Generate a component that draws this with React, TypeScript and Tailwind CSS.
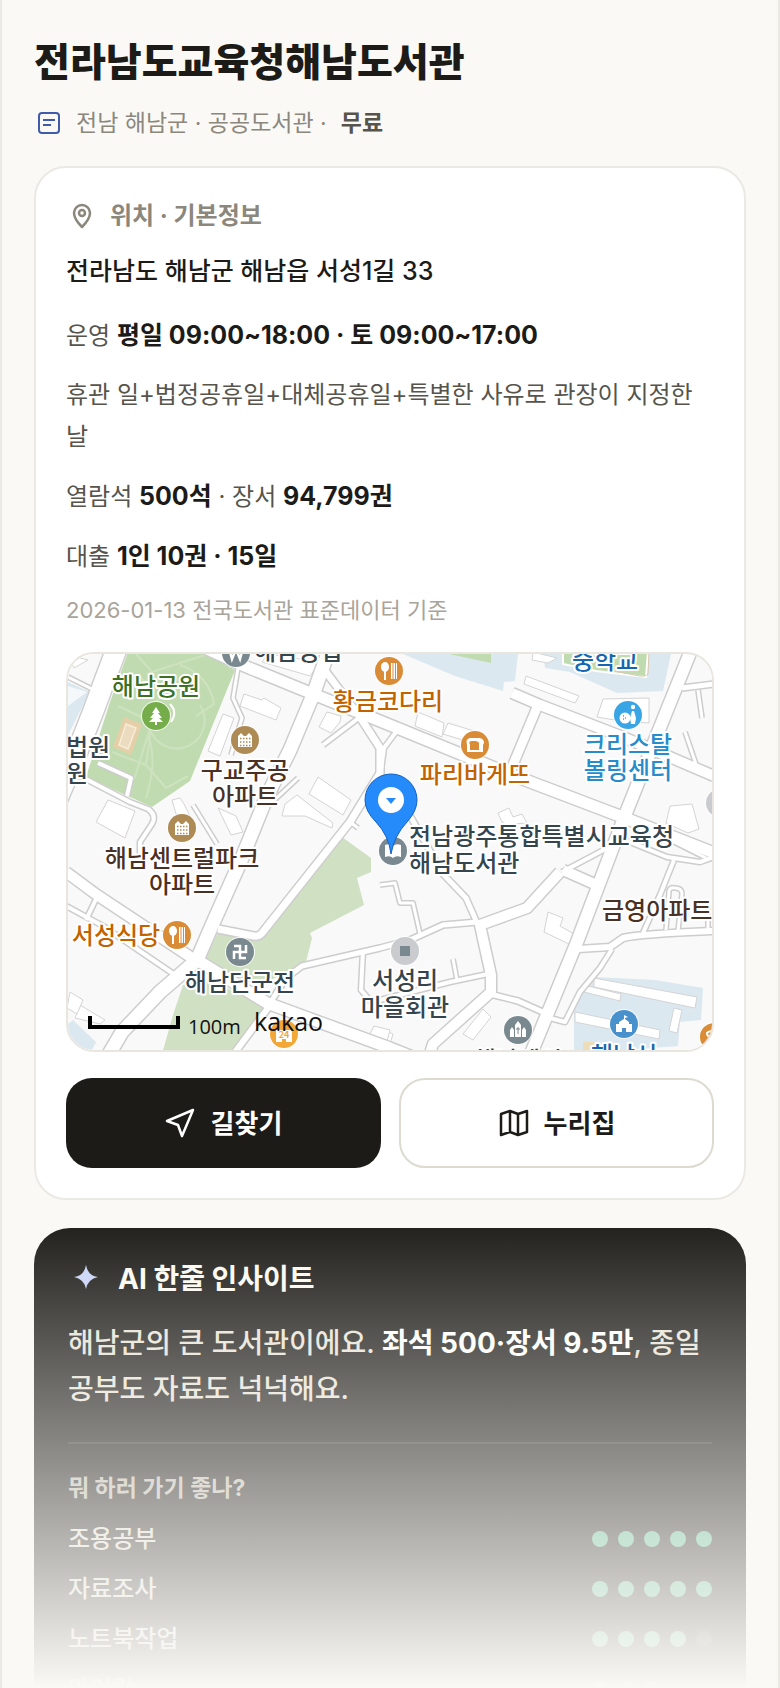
import type { ReactNode } from "react";

type Road = { d: string; w: number };

type MapLabel = {
  x: number;
  y: number;
  text: string;
  color: string;
  anchor?: "start" | "middle";
};

type Activity = { name: string; score: number };

const SLATE = "#35454d";
const BROWN = "#4b3124";
const ORANGE = "#c26300";

const ROADS: Road[] = [
  { d: "M68 677L92 689", w: 5 },
  { d: "M98 763L131 778L127 796", w: 6 },
  { d: "M80 776L130 802L148 809Q157 815 152 824L140 842V860", w: 6 },
  { d: "M238 668L233 698L242 718L231 755", w: 5 },
  { d: "M360 717L323 745", w: 6 },
  { d: "M193 805L217 844", w: 5 },
  { d: "M298 778L268 806", w: 5 },
  { d: "M323 668L360 717L380 748V773L350 822L262 933Q259 937 254 936L218 929", w: 9 },
  { d: "M350 822L358 828", w: 5 },
  { d: "M396 732L384 748L381 770", w: 6 },
  { d: "M682 688L714 684", w: 7 },
  { d: "M698 690L702 718", w: 5 },
  { d: "M685 732L697 767", w: 5 },
  { d: "M625 840L667 857L700 862L714 857", w: 6 },
  { d: "M640 825L706 858", w: 5 },
  { d: "M674 860L660 895L643 933", w: 6 },
  { d: "M666 930L669 891Q670 887 675 888Q682 888 682 894L678 931", w: 5 },
  { d: "M708 908V930", w: 5 },
  { d: "M578 949L610 947L623 938Q640 934 714 931", w: 8 },
  { d: "M612 949L600 968L580 992L565 1022L550 1018", w: 6 },
  { d: "M613 845L562 872", w: 6 },
  { d: "M563 870L599 886", w: 12 },
  { d: "M560 872L527 908L480 925L491 975V992L433 1044L428 1060", w: 12 },
  { d: "M490 994L518 1001L545 1013", w: 7 },
  { d: "M408 812L443 874L466 898L478 925", w: 7 },
  { d: "M478 922L443 925L410 940L380 948L302 966L286 978L272 1000", w: 7 },
  { d: "M380 885L395 883L400 903H413L420 934", w: 5 },
  { d: "M453 959L457 980", w: 5 },
  { d: "M380 1000L450 982L488 974", w: 6 },
  { d: "M363 950L361 990L378 1010", w: 6 },
  { d: "M66 872L97 895L192 958", w: 12 },
  { d: "M66 906L103 926L175 975", w: 6 },
  { d: "M97 897L86 920", w: 6 },
  { d: "M268 1008L233 1055", w: 8 },
  { d: "M197 960L267 1003L390 1048L420 1060", w: 13 },
  { d: "M512 693L540 705L623 737L714 776", w: 12 },
  { d: "M538 705L510 772", w: 11 },
  { d: "M329 650L313 695L290 750L267 796L242 858L213 923L197 960L160 992L122 1032L108 1056", w: 15 },
  { d: "M205 648L242 665L313 694L380 721L512 775L625 818L714 853", w: 13 },
  { d: "M692 648L657 735L624 818L577 942L547 1015L530 1056", w: 14 },
];

const BUILDINGS = [
  "68,655 88,660 74,668",
  "244,694 262,700 264,698 281,708 276,720 240,706",
  "223,714 234,718 220,756 208,751",
  "327,712 341,716 340,722 331,733 319,727",
  "268,654 320,662 310,676 262,662",
  "108,800 135,811 125,838 96,822",
  "172,800 180,798 184,804 190,816 176,814",
  "218,808 236,816 243,832 231,835",
  "318,777 351,800 343,815 309,794",
  "285,804 297,795 333,823 332,828 305,816 282,816",
  "526,676 579,696 575,703 524,684",
  "603,699 649,698 649,723 621,721 597,717",
  "418,712 444,723 442,737 415,726",
  "448,723 474,731 466,741 443,734",
  "533,652 557,658 548,663 532,660",
  "498,813 509,808 513,817 522,814 527,823 512,824 510,826 502,822",
  "670,806 692,804 699,829 688,833 666,823",
  "548,912 563,918 560,926 574,934 569,944 544,932",
  "594,978 697,997 695,1008 594,987",
  "584,985 621,994 620,1001 584,992",
  "575,1012 660,1030 659,1039 575,1022",
  "674,1008 682,1010 677,1033 669,1031",
  "483,1009 491,1017 473,1040 463,1034 471,1024",
  "380,1028 393,1034 390,1044 374,1038",
  "80,1005 105,1020 100,1024 75,1018",
  "70,992 83,1000 77,1014 67,1008",
  "374,1026 390,1030 386,1045 368,1038",
];

const LABELS: MapLabel[] = [
  { x: 156, y: 695, text: "해남공원", color: "#3c7024" },
  { x: 66, y: 756, text: "법원", color: SLATE, anchor: "start" },
  { x: 66, y: 782, text: "원", color: SLATE, anchor: "start" },
  { x: 254, y: 660, text: "해남농협", color: SLATE, anchor: "start" },
  { x: 245, y: 779, text: "구교주공", color: BROWN },
  { x: 245, y: 805, text: "아파트", color: BROWN },
  { x: 182, y: 867, text: "해남센트럴파크", color: BROWN },
  { x: 182, y: 893, text: "아파트", color: BROWN },
  { x: 388, y: 710, text: "황금코다리", color: ORANGE },
  { x: 605, y: 669, text: "중학교", color: "#1767b0" },
  { x: 628, y: 753, text: "크리스탈", color: "#268ccb" },
  { x: 628, y: 779, text: "볼링센터", color: "#268ccb" },
  { x: 475, y: 783, text: "파리바게뜨", color: ORANGE },
  { x: 409, y: 845, text: "전남광주통합특별시교육청", color: SLATE, anchor: "start" },
  { x: 409, y: 872, text: "해남도서관", color: SLATE, anchor: "start" },
  { x: 602, y: 919, text: "금영아파트", color: BROWN, anchor: "start" },
  { x: 116, y: 944, text: "서성식당", color: ORANGE },
  { x: 240, y: 991, text: "해남단군전", color: SLATE },
  { x: 405, y: 989, text: "서성리", color: SLATE },
  { x: 405, y: 1016, text: "마을회관", color: SLATE },
  { x: 624, y: 1064, text: "해남서", color: "#1767b0" },
  { x: 518, y: 1069, text: "해남제일", color: SLATE },
];

const ACTIVITIES: Activity[] = [
  { name: "조용공부", score: 5 },
  { name: "자료조사", score: 5 },
  { name: "노트북작업", score: 4 },
  { name: "아이랑", score: 3 },
];

function Poi({ x, y, fill, children }: { x: number; y: number; fill: string; children?: ReactNode }) {
  return (
    <g transform={`translate(${x} ${y})`}>
      <circle r="15" fill="#fff" opacity="0.85" />
      <circle r="14" fill={fill} />
      {children}
    </g>
  );
}

function FoodGlyph() {
  return (
    <g fill="#fff">
      <ellipse cx="-4" cy="-4" rx="4" ry="5" />
      <path d="M-5 0h2v9h-2zM2 -8h1.500V8H2zM4.500 -8H6V8H4.500zM7 -8h1V8H7z" />
    </g>
  );
}

function ApartmentGlyph() {
  return (
    <g>
      <path d="M-7 7V-4l3-3 3 3h2l3-3 3 3V7z" fill="#fff" />
      <path d="M-5 -1.500H5.500M-5 2H5.500M-5 5.500H5.500" stroke="#ae8a55" strokeWidth="1.500" strokeDasharray="1.500 1.500" />
    </g>
  );
}

function LocationMap() {
  return (
    <svg
      viewBox="68 654 644 396"
      preserveAspectRatio="xMidYMid slice"
      className="block h-full w-full font-['Noto_Sans_CJK_KR',sans-serif]"
      role="img"
      aria-label="도서관 위치 지도"
    >
      <rect x="60" y="640" width="670" height="420" fill="#f9f9f9" />

      {/* school grounds and water-blue lots */}
      <g fill="#dce8f0">
        <path d="M68 682L90 692L68 735z" />
        <path d="M403 654H518L515 681L504 682L503 691L455 676z" />
        <path d="M543 654H671L663 691L617 693L570 672L545 668z" />
        <path d="M594 977L655 980L703 988L701 1020L680 1022L678 1046L600 1052L574 1052L574 1002z" />
        <path d="M73 1020L96 1042L90 1054H68V1024z" />
      </g>
      <path d="M68 686L87 692L68 706z" fill="#fff" opacity="0.7" />
      <path d="M440 652H491V663z" fill="#c1dbb0" />
      <path d="M563 652H648L646 677L596 671L563 664z" fill="#c1dbb0" stroke="#fff" strokeWidth="2" />
      <path d="M649 652L648 674Q646 677 640 676L603 669" fill="none" stroke="#d9c7b0" strokeWidth="1" />
      <path d="M583 1042H596V1054H583z" fill="#eddcb8" />

      {/* park */}
      <path d="M128 652H203L235 670L190 781L152 807L86 777L110 702z" fill="#c1dbb0" />
      <g fill="none" stroke="#cde2be" strokeWidth="2">
        <path d="M136 654L152 672L205 655M136 674L150 686M118 706L152 722L146 765L112 752" />
        <path d="M165 695A28 28 0 1 0 200 705" />
        <path d="M180 665A48 48 0 0 1 214 704L196 716M152 722L134 780M146 765L166 788L188 776M148 736Q158 760 146 798" />
      </g>
      <path d="M124 717L142 724L131 755L113 747z" fill="#e5cfa8" />
      <path d="M126 724L136 728L128 749L119 745z" fill="#ecdcbf" stroke="#f7ecd8" strokeWidth="1.500" />
      <path d="M170 704Q178 712 171 722" fill="none" stroke="#fff" strokeWidth="2" />

      <path d="M342 837L371 858V872L357 878L364 905L310 933L312 938L306 962L267 982L227 984L205 960L218 932L260 938z" fill="#d0e0c3" />
      <path d="M183 985L207 978L267 1008L228 1054H162L173 1015z" fill="#d0e0c3" />

      <g fill="#fff" stroke="#d4d4d4" strokeWidth="1">
        {BUILDINGS.map((points) => (
          <polygon key={points} points={points} />
        ))}
      </g>

      <g fill="none" strokeLinejoin="round">
        <path d="M118 645L93 712L72 765L56 802" stroke="#cfcfcf" strokeWidth="23" />
        {ROADS.map((road) => (
          <path key={road.d} d={road.d} stroke="#cdcdcd" strokeWidth={road.w + 1} />
        ))}
        <path d="M118 645L93 712L72 765L56 802" stroke="#fff" strokeWidth="20" />
        {ROADS.map((road) => (
          <path key={road.d} d={road.d} stroke="#fff" strokeWidth={road.w - 2} />
        ))}
      </g>

      <Poi x={156} y={716} fill="#74ad49">
        <path d="M0 -9L4 -3H2L6 2H3L7 6H1V9H-1V6H-7L-3 2H-6L-2 -3H-4z" fill="#fff" />
      </Poi>
      <Poi x={236} y={653} fill="#7a8990">
        <path d="M-7 -5L-4 6L0 -4L4 6L7 -5" fill="none" stroke="#fff" strokeWidth="2.500" />
      </Poi>
      <Poi x={245} y={740} fill="#ae8a55">
        <ApartmentGlyph />
      </Poi>
      <Poi x={182} y={828} fill="#ae8a55">
        <ApartmentGlyph />
      </Poi>
      <Poi x={389} y={671} fill="#d98b36">
        <FoodGlyph />
      </Poi>
      <Poi x={177} y={935} fill="#d98b36">
        <FoodGlyph />
      </Poi>
      <Poi x={475} y={745} fill="#d98b36">
        <path d="M-5 -7H5Q9 -6 9 -2L8 0V7H-8V0Q-10 -6 -5 -7z" fill="#fff" />
        <path d="M-3 -4H1Q5 -3 4 0V5H-5V0Q-7 -4 -3 -4z" fill="#d98b36" />
      </Poi>
      <Poi x={628} y={715} fill="#3aa5e4">
        <g fill="#fff">
          <circle cx="-3" cy="3" r="5.500" />
          <circle cx="5" cy="-8" r="2.200" />
          <path d="M4 -4H6L8 3L7 9H3L2 3z" />
        </g>
        <path d="M-5 1h1M-3 3h1M-5 4h1" stroke="#3aa5e4" strokeWidth="1.500" />
      </Poi>
      <Poi x={720} y={803} fill="#c9cbcf" />
      <Poi x={393} y={851} fill="#7a8990">
        <path d="M-8 -6Q-3 -8 0 -5Q3 -8 8 -6V6Q3 4 0 7Q-3 4 -8 6z" fill="#fff" />
      </Poi>
      <Poi x={240} y={952} fill="#7a8990">
        <path d="M-6 -6H0V6H6M6 -7V0H-6V7" fill="none" stroke="#fff" strokeWidth="2.500" />
      </Poi>
      <Poi x={405} y={951} fill="#c9cbcf">
        <rect x="-5" y="-5" width="10" height="10" fill="#7a8990" />
      </Poi>
      <Poi x={518} y={1030} fill="#7a8990">
        <path d="M-3 7V-5L0 -9L3 -5V7zM-8 7V0L-6 -3L-4 0V7zM4 7V0L6 -3L8 0V7z" fill="#fff" />
        <path d="M0 -3V4M-2 -1H2" stroke="#7a8990" strokeWidth="1" />
      </Poi>
      <Poi x={624} y={1024} fill="#4991cd">
        <path d="M-8 8V0H-5V-2L0 -5V-9L4 -7L1 -6V-5L5 -2V0H8V8H2V4H-2V8z" fill="#fff" />
      </Poi>
      <Poi x={714} y={1037} fill="#d98b36">
        <path d="M-7 -4Q-4 -7 0 -5V5H-3V0Q-7 0 -7 -4z" fill="none" stroke="#fff" strokeWidth="2" />
      </Poi>
      <Poi x={284} y={1034} fill="#f3a739">
        <path d="M-8 8V-4H8V8H2V5H-2V8z" fill="#fff" />
        <text y="4" textAnchor="middle" fontSize="9" fontWeight="700" fill="#f3a739">
          24
        </text>
      </Poi>

      <g fontSize="24" fontWeight="500" stroke="#fff" strokeWidth="4" strokeLinejoin="round" paintOrder="stroke">
        {LABELS.map((label) => (
          <text
            key={`${label.x}-${label.y}`}
            x={label.x}
            y={label.y}
            textAnchor={label.anchor ?? "middle"}
            fill={label.color}
          >
            {label.text}
          </text>
        ))}
      </g>

      {/* selected place */}
      <path
        d="M391 854Q389 836 376 822Q365 811 365 800A26 26 0 0 1 417 800Q417 811 407 822Q394 836 391 854z"
        fill="#258bfb"
        stroke="#1461c4"
        strokeWidth="1"
      />
      <circle cx="391" cy="800" r="13" fill="#fff" />
      <path d="M386 798H396L391 804z" fill="#258bfb" />

      <path d="M90 1016V1027H178V1016" fill="none" stroke="#000" strokeWidth="4" />
      <text x="188" y="1034" fontSize="20" fill="#111" className="font-['Open_Sans',sans-serif]">
        100m
      </text>
      <text x="254" y="1031" fontSize="25" fontWeight="500" fill="#111" className="font-['Open_Sans',sans-serif]">
        kakao
      </text>
    </svg>
  );
}

function ScoreDots({ score }: { score: number }) {
  return (
    <span className="flex gap-[10px]" role="img" aria-label={`5점 중 ${score}점`}>
      {[1, 2, 3, 4, 5].map((n) => (
        <span key={n} className={`size-4 rounded-full ${n <= score ? "bg-[#58b68b]" : "bg-white/15"}`} />
      ))}
    </span>
  );
}

function Strong({ children }: { children: ReactNode }) {
  return <b className="text-[25px] font-bold text-[#1c1b18]">{children}</b>;
}

function InfoCard() {
  return (
    <section className="rounded-[32px] border-2 border-[#ebe9e3] bg-white p-[30px]">
      <h2 className="flex h-9 items-center gap-3 text-[24px] font-bold text-[#8b877c]">
        <svg viewBox="0 0 32 32" className="size-8" fill="none" stroke="currentColor" strokeWidth="2.500">
          <path d="M16 27Q8 19 8 13a8 8 0 0 1 16 0q0 6-8 14z" strokeLinejoin="round" />
          <circle cx="16" cy="13" r="3" />
        </svg>
        위치 · 기본정보
      </h2>

      <p className="mt-4 text-[25px] leading-[42px] font-medium text-[#1c1b18]">전라남도 해남군 해남읍 서성1길 33</p>

      <div className="mt-[22px] space-y-[17px] text-[24px] leading-[42px] text-[#57544c]">
        <p>
          운영 <Strong>평일 09:00~18:00 · 토 09:00~17:00</Strong>
        </p>
        <p>휴관 일+법정공휴일+대체공휴일+특별한 사유로 관장이 지정한 날</p>
        <p>
          열람석 <Strong>500석</Strong> · 장서 <Strong>94,799권</Strong>
        </p>
        <p>
          대출 <Strong>1인 10권 · 15일</Strong>
        </p>
      </div>

      <p className="mt-[14px] text-[22px] leading-9 text-[#a8a49a]">2026-01-13 전국도서관 표준데이터 기준</p>

      <div className="mt-6 h-[400px] overflow-hidden rounded-[28px] border-2 border-[#e9e6df]">
        <LocationMap />
      </div>

      <div className="mt-[26px] grid grid-cols-2 gap-[18px] text-[26px] font-bold">
        <a
          href="#directions"
          className="flex h-[90px] items-center justify-center gap-[14px] rounded-[26px] bg-[#1d1b17] text-white"
        >
          <svg viewBox="0 0 32 32" className="size-8" fill="none" stroke="currentColor" strokeWidth="2.500">
            <path d="M28 3L2 14L13 18L17 29z" strokeLinejoin="round" />
          </svg>
          길찾기
        </a>
        <a
          href="#homepage"
          className="flex h-[90px] items-center justify-center gap-[14px] rounded-[26px] border-2 border-[#dddad1] bg-white text-[#1d1b17]"
        >
          <svg viewBox="0 0 32 32" className="size-8" fill="none" stroke="currentColor" strokeWidth="2.500">
            <path d="M3 7L12 4L20 7L29 4V25L20 28L12 25L3 28zM12 4V25M20 7V28" strokeLinejoin="round" />
          </svg>
          누리집
        </a>
      </div>
    </section>
  );
}

function InsightCard() {
  return (
    <section className="mt-7 rounded-[36px] bg-[#1d1b17] p-[34px] pt-[30px]">
      <h2 className="flex h-[42px] items-center gap-[14px] text-[28px] font-bold text-[#fbf9f2]">
        <svg viewBox="0 0 36 36" className="size-9" fill="#c7d3f7">
          <path d="M18 4Q20 15 30 16Q20 18 18 28Q16 18 6 16Q16 15 18 4z" />
        </svg>
        AI 한줄 인사이트
      </h2>

      <p className="mt-5 text-[28px] leading-[46px] font-medium text-[#e8e3d7]">
        해남군의 큰 도서관이에요. <b className="font-bold text-white">좌석 500·장서 9.5만</b>, 종일 공부도 자료도
        넉넉해요.
      </p>

      <div className="mt-[30px] border-t-2 border-white/10 pt-7">
        <h3 className="text-[23px] leading-8 font-bold text-[#bcb7aa]">뭐 하러 가기 좋나?</h3>
        <ul className="mt-[10px] text-[24px] font-medium text-[#dedad0]">
          {ACTIVITIES.map((activity) => (
            <li key={activity.name} className="flex h-[50px] items-center justify-between">
              {activity.name}
              <ScoreDots score={activity.score} />
            </li>
          ))}
        </ul>
      </div>
    </section>
  );
}

export default function App() {
  return (
    <main className="relative h-screen overflow-hidden border-x-2 border-[#ebe9e3] bg-[#faf9f6] px-8 pt-8 font-['Inter','Noto_Sans_CJK_KR',sans-serif]">
      <h1 className="text-[39px] leading-[60px] font-extrabold text-[#1d1b17]">전라남도교육청해남도서관</h1>

      <div className="mt-3 mb-6 flex h-[38px] items-center text-[23px] text-[#8b877c]">
        <svg viewBox="0 0 30 30" className="mr-3 size-[30px]" fill="none" stroke="#3f5ba9" strokeWidth="2">
          <rect x="5" y="5" width="20" height="20" rx="3" />
          <path d="M9 12H21M9 17H17" />
        </svg>
        <span>전남 해남군 · 공공도서관 ·</span>
        <b className="ml-[14px] font-bold text-[#57544c]">무료</b>
      </div>

      <InfoCard />
      <InsightCard />

      {/* fades the rest of the page out */}
      <div className="pointer-events-none absolute inset-x-0 bottom-0 h-[476px] bg-linear-to-b from-[#faf9f6]/0 to-[#faf9f6]" />
    </main>
  );
}
